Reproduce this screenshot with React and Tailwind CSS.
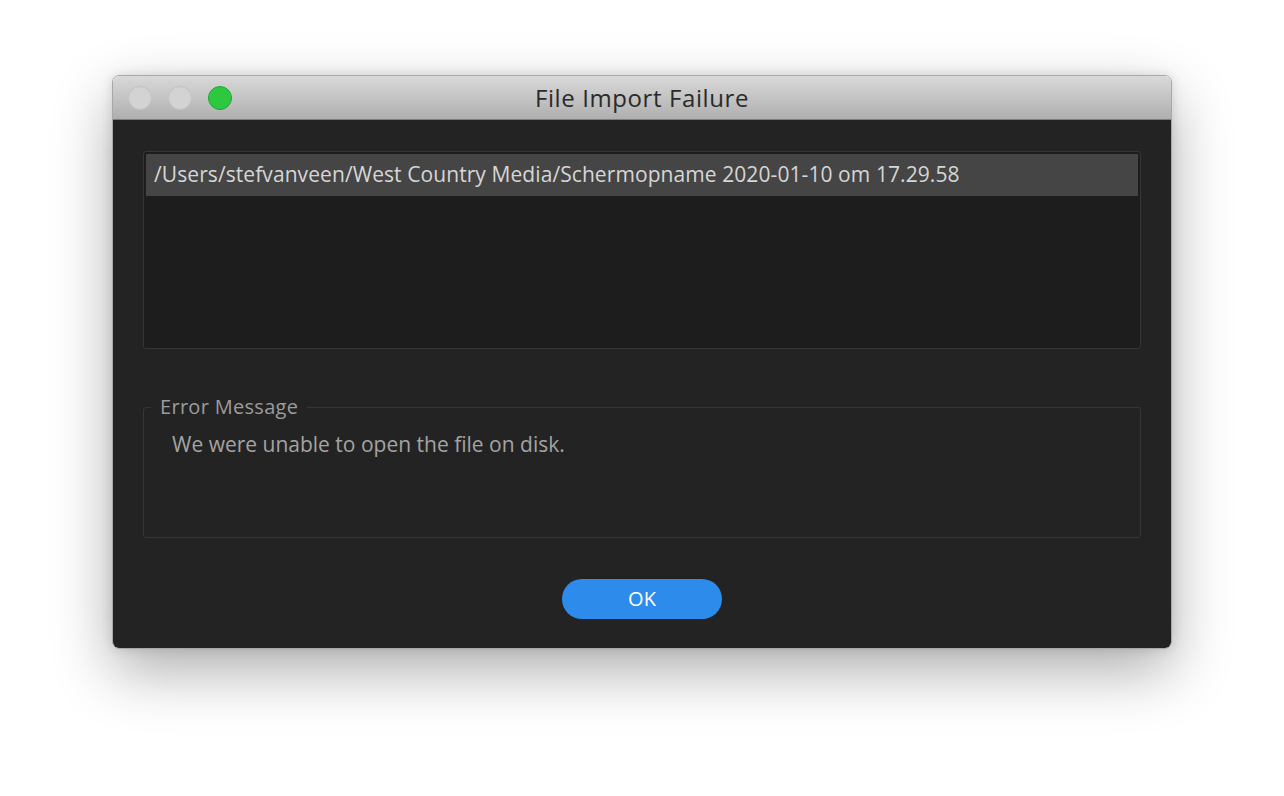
import React from "react";

function TrafficLight({ color, border }) {
  return (
    <span
      className={`block h-[24px] w-[24px] rounded-full border ${color} ${border}`}
    />
  );
}

export default function App() {
  return (
    <div
      className="min-h-[796px] bg-white pl-[112px] pt-[75px]"
      style={{ fontFamily: '"Open Sans", "Noto Sans", sans-serif' }}
    >
      <div className="w-[1060px] overflow-hidden rounded-[7px] border border-[#a8a8a8] shadow-[0_22px_60px_rgba(0,0,0,0.32),0_0_12px_rgba(0,0,0,0.12)]">
        {/* Title bar */}
        <div className="relative flex h-[44px] items-center border-b border-[#7d7d7d] bg-gradient-to-b from-[#d9d9d9] to-[#afafaf]">
          <div className="flex items-center gap-[16px] pl-[15px]">
            <TrafficLight color="bg-[#d3d3d3]" border="border-[#c2c2c2]" />
            <TrafficLight color="bg-[#d3d3d3]" border="border-[#c2c2c2]" />
            <TrafficLight color="bg-[#2bc840]" border="border-[#22a634]" />
          </div>
          <div className="absolute inset-0 flex items-center justify-center text-[24px] tracking-[0.6px] text-[#2a2a2a]">
            File Import Failure
          </div>
        </div>

        {/* Body */}
        <div className="bg-[#232323] px-[30px] pb-[29px] pt-[31px]">
          <div className="h-[198px] rounded-[3px] border border-[#363636] bg-[#1d1d1d] p-[2px]">
            <div className="flex h-[42px] items-center bg-[#454545] pl-[8px] text-[21px] tracking-[0.08px] text-[#d6d6d6]">
              /Users/stefvanveen/West Country Media/Schermopname 2020-01-10 om
              17.29.58
            </div>
          </div>

          <fieldset className="mt-[46px] h-[143px] rounded-[3px] border border-[#363636] px-[28px]">
            <legend className="-ml-[21px] px-[9px] text-[20px] leading-[24px] tracking-[0.3px] text-[#9c9c9c]">
              Error Message
            </legend>
            <p className="pt-[13px] text-[21px] leading-[24px] text-[#a3a3a3]">
              We were unable to open the file on disk.
            </p>
          </fieldset>

          <div className="mt-[41px] flex justify-center">
            <button className="h-[40px] w-[160px] rounded-full bg-[#2d8ceb] text-[20px] text-white">
              OK
            </button>
          </div>
        </div>
      </div>
    </div>
  );
}
